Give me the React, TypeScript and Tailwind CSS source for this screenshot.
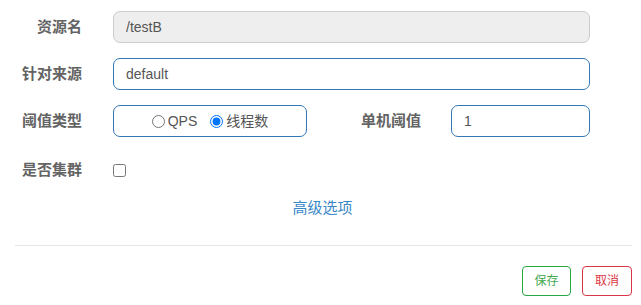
const labelCls = "text-right text-[15px] font-bold text-[#636363]";

export default function App() {
  return (
    <div
      className="w-[641px] h-[305px] bg-white overflow-hidden"
      style={{ fontFamily: '"Liberation Sans", "Noto Sans CJK SC", sans-serif' }}
    >
      <div className="flex flex-col gap-[15px] pt-[11px]">
        <div className="flex items-center h-[32px]">
          <label className={`${labelCls} w-[82px]`}>资源名</label>
          <input
            disabled
            value="/testB"
            readOnly
            className="ml-[31px] w-[477px] h-[32px] rounded-[7px] border border-[#ccc] bg-[#eee] px-[12px] text-[14px] text-[#555] outline-none"
          />
        </div>
        <div className="flex items-center h-[32px]">
          <label className={`${labelCls} w-[82px]`}>针对来源</label>
          <input
            value="default"
            readOnly
            className="ml-[31px] w-[477px] h-[32px] rounded-[7px] border border-[#3377b6] bg-white px-[12px] text-[14px] text-[#555] outline-none"
          />
        </div>
        <div className="flex items-center h-[32px]">
          <label className={`${labelCls} w-[82px]`}>阈值类型</label>
          <div className="ml-[31px] w-[194px] h-[32px] rounded-[7px] border border-[#3377b6] flex items-center justify-center text-[14px] text-[#555]">
            <label className="flex items-center">
              <input type="radio" name="grade" className="m-0 w-[13px] h-[13px]" />
              <span className="ml-[3px]">QPS</span>
            </label>
            <label className="flex items-center ml-[13px]">
              <input type="radio" name="grade" defaultChecked className="m-0 w-[13px] h-[13px]" />
              <span className="ml-[3px]">线程数</span>
            </label>
          </div>
          <label className={`${labelCls} w-[114px]`}>单机阈值</label>
          <input
            value="1"
            readOnly
            className="ml-[30px] w-[139px] h-[32px] rounded-[7px] border border-[#3377b6] bg-white px-[12px] text-[14px] text-[#555] outline-none"
          />
        </div>
        <div className="flex items-center h-[32px] mt-[2px]">
          <label className={`${labelCls} w-[82px]`}>是否集群</label>
          <input type="checkbox" className="ml-[31px] m-0 w-[13px] h-[13px]" />
        </div>
        <div className="flex items-center justify-center h-[32px] -mt-[9px] pl-[4px]">
          <a className="text-[15px] text-[#3a87c8] cursor-pointer">高级选项</a>
        </div>
      </div>
      <div className="mx-[15px] mt-[21px] w-[617px] border-t border-[#e5e5e5]" />
      <div className="flex justify-end gap-[11px] pr-[9px] mt-[20px]">
        <button className="w-[49px] h-[30px] rounded-[4px] border border-[#28a745] text-[12px] text-[#3fa84f] bg-white">
          保存
        </button>
        <button className="w-[50px] h-[30px] rounded-[4px] border border-[#dc3545] text-[12px] text-[#dc3545] bg-white">
          取消
        </button>
      </div>
    </div>
  );
}
